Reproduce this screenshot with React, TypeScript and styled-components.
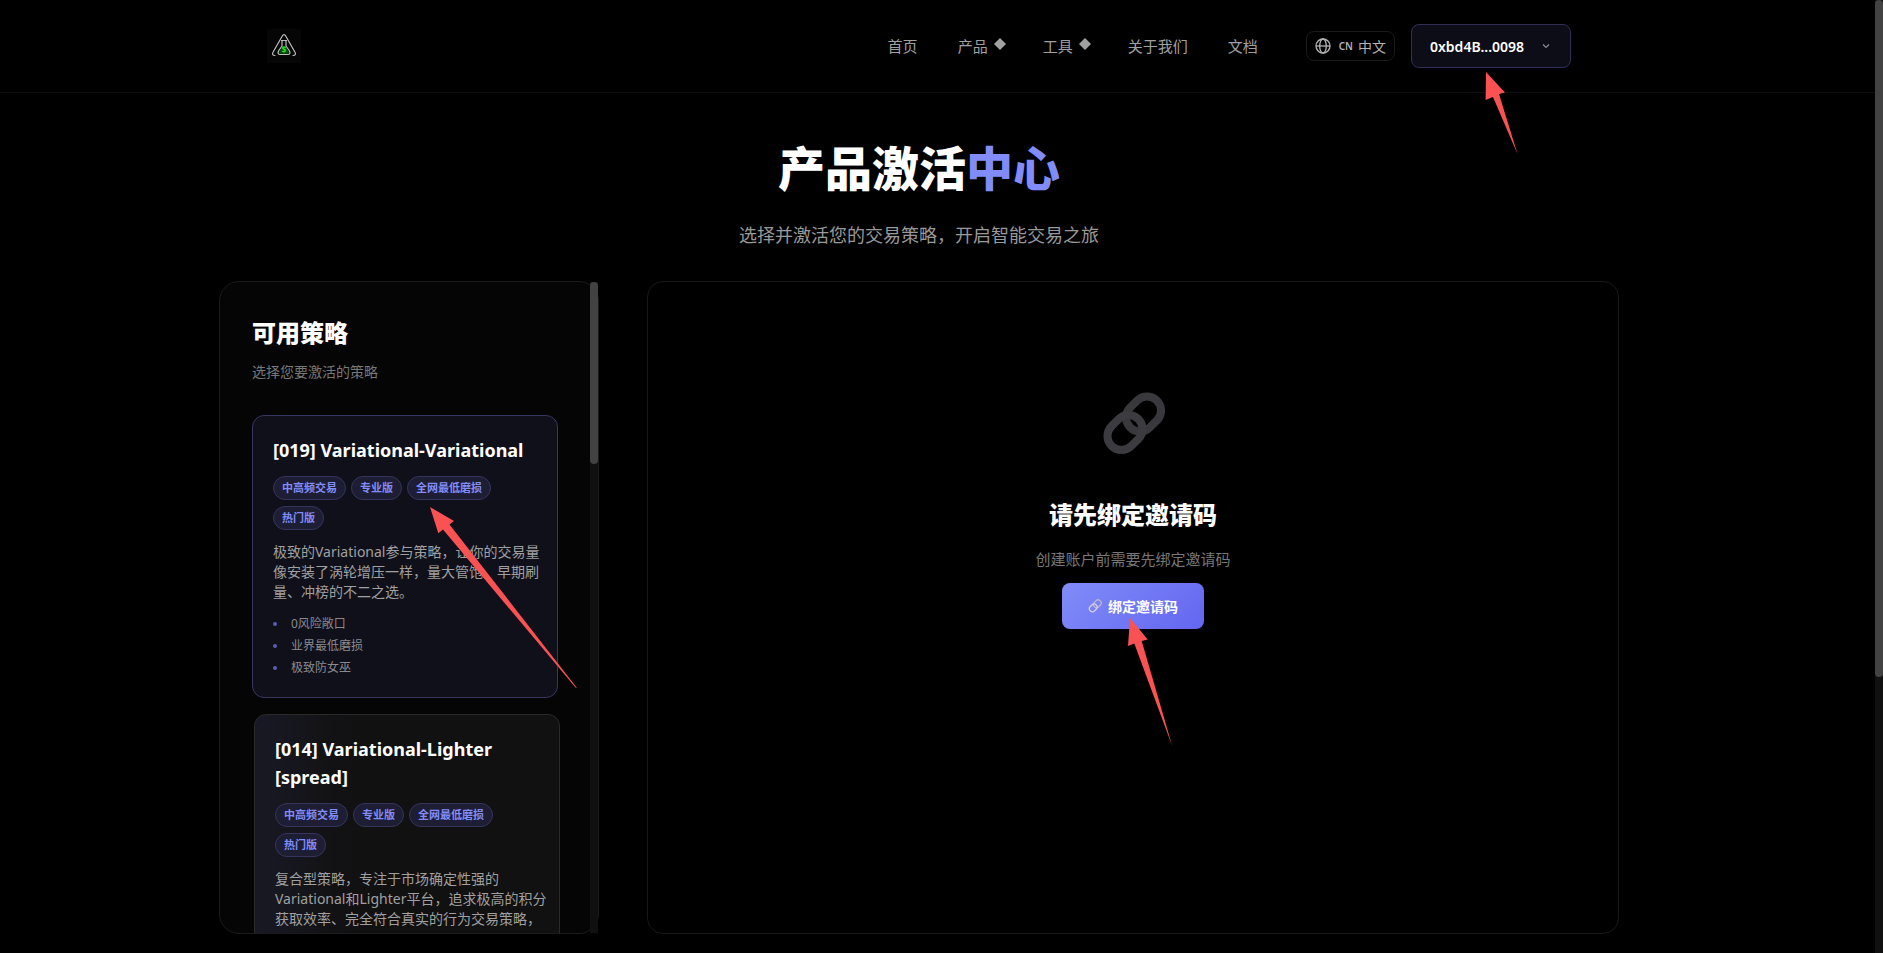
import React from "react";
import styled, { createGlobalStyle, css } from "styled-components";

const GlobalStyle = createGlobalStyle`
  *, *::before, *::after { box-sizing: border-box; }
  body {
    margin: 0;
    background: #000;
    color: #fff;
    font-family: "Noto Sans", "Noto Sans CJK SC", sans-serif;
    font-size: 14px;
  }
  h1, h2, h3, p, ul { margin: 0; padding: 0; }
  ul { list-style: none; }
  button { font: inherit; color: inherit; cursor: pointer; }
  a { color: inherit; text-decoration: none; }
`;

const Page = styled.div`
  min-height: 100vh;
  padding-right: 8px;
  overflow: hidden;
`;

const Header = styled.header`
  border-bottom: 1px solid #101010;
  padding-right: 37px;
`;

const HeaderInner = styled.div`
  max-width: 1400px;
  margin: 0 auto;
  padding: 24px 48px;
  display: flex;
  align-items: center;
  justify-content: space-between;
`;

const LogoLink = styled.a`
  display: flex;
  width: 34px;
  height: 34px;
  background: #060606;
`;

const HeaderRight = styled.div`
  display: flex;
  align-items: center;
  gap: 48px;
`;

const Nav = styled.nav`
  display: flex;
  align-items: center;
  gap: 40px;
`;

const NavLink = styled.a`
  display: flex;
  align-items: center;
  gap: 6px;
  font-size: 15px;
  line-height: 24px;
  color: #a0a0a0;

  svg { margin: -4px -3px 0 0; }
`;

const Actions = styled.div`
  display: flex;
  align-items: center;
  gap: 16px;
`;

const LanguageButton = styled.button`
  display: flex;
  align-items: center;
  gap: 5px;
  height: 30px;
  padding: 0 8px;
  border: 1px solid #1a1a1a;
  border-radius: 8px;
  background: transparent;
  color: #b4b4b4;
  font-size: 14px;

  small {
    margin-left: 3px;
    font-size: 10px;
    font-weight: 600;
  }
`;

const WalletButton = styled.button`
  position: relative;
  display: flex;
  align-items: center;
  justify-content: space-between;
  width: 160px;
  height: 44px;
  padding: 0 20px 0 18px;
  border: 1px solid #302e55;
  border-radius: 8px;
  background: #0d0d17;
  font-size: 14px;
  font-weight: 600;
`;

const Main = styled.main`
  padding: 47px 37px 19px 0;
`;

const Hero = styled.section`
  text-align: center;
`;

const Title = styled.h1`
  font-size: 47px;
  line-height: 56px;
  font-weight: 900;

  span { color: #818cf8; }
`;

const Subtitle = styled.p`
  margin-top: 24px;
  font-size: 18px;
  line-height: 30px;
  font-weight: 400;
  color: #999;
`;

const Columns = styled.div`
  max-width: 1400px;
  height: calc(100vh - 300px);
  margin: 31px auto 0;
  display: grid;
  grid-template-columns: 380px minmax(0, 1fr);
  gap: 48px;
`;

const SidebarFrame = styled.aside`
  position: relative;
  min-height: 0;
`;

const Sidebar = styled.div`
  height: 100%;
  overflow: hidden;
  padding: 32px 40px 0 32px;
  border: 1px solid #1b1b1b;
  border-radius: 20px;
  background: #050505;
`;

const SidebarTitle = styled.h2`
  font-size: 24px;
  line-height: 38px;
  font-weight: 900;
`;

const SidebarHint = styled.p`
  margin: 7px 0 31px;
  font-size: 14px;
  line-height: 25px;
  color: #777;
`;

const CardList = styled.div`
  display: flex;
  flex-direction: column;
  gap: 16px;
`;

type CardState = "selected" | "hovered";

const Card = styled.article<{ $state: CardState }>`
  position: relative;
  padding: 20px;
  border: 1px solid #2a2a2a;
  border-radius: 12px;
  ${({ $state }) =>
    $state === "selected"
      ? css`
          z-index: 1;
          border-color: #37365f;
          background: #10101b;
        `
      : css`
          background: linear-gradient(90deg, #191926 0, #121214 80px, #111 130px);
          transform: translateX(2px);
        `}
`;

const CardTitle = styled.h3`
  font-size: 18px;
  line-height: 28px;
  font-weight: 700;
`;

const Tags = styled.div`
  display: flex;
  flex-wrap: wrap;
  gap: 6px 5px;
  margin: 12px 0;
`;

const Tag = styled.span`
  height: 24px;
  padding: 0 8px;
  border: 1px solid #35345c;
  border-radius: 12px;
  background: #1d1d33;
  color: #818cf8;
  font-size: 11px;
  line-height: 22px;
  font-weight: 600;
`;

const Description = styled.p`
  font-size: 14px;
  line-height: 20px;
  color: #a0a0a0;
  white-space: pre;
`;

const Features = styled.ul`
  display: flex;
  flex-direction: column;
  gap: 4px;
  margin-top: 13px;

  li {
    display: flex;
    align-items: center;
    gap: 14px;
    font-size: 12px;
    line-height: 18px;
    color: #8a8a8e;
  }

  li::before {
    content: "";
    width: 4px;
    height: 4px;
    border-radius: 2px;
    background: #5c5fa8;
  }
`;

const Panel = styled.section`
  display: flex;
  flex-direction: column;
  align-items: center;
  padding-top: 110px;
  border: 1px solid #181818;
  border-radius: 16px;
  text-align: center;
`;

const PanelTitle = styled.h2`
  margin-top: 42px;
  font-size: 24px;
  line-height: 34px;
  font-weight: 900;
`;

const PanelText = styled.p`
  margin: 15px 0 12px;
  font-size: 15px;
  line-height: 24px;
  color: #777;
`;

const BindButton = styled.button`
  position: relative;
  display: flex;
  align-items: center;
  gap: 6px;
  height: 46px;
  padding: 0 26px;
  border: 0;
  border-radius: 8px;
  background: linear-gradient(135deg, #818cf8, #6366f1);
  color: #fff;
  font-size: 14px;
  font-weight: 700;
`;

const Track = styled.div<{ $page?: boolean }>`
  position: ${({ $page }) => ($page ? "fixed" : "absolute")};
  top: ${({ $page }) => ($page ? 0 : 1)}px;
  right: ${({ $page }) => ($page ? 0 : 1)}px;
  bottom: ${({ $page }) => ($page ? 0 : 1)}px;
  width: 8px;
  background: #101010;
`;

const Thumb = styled.div<{ $size: number }>`
  height: ${({ $size }) => $size}%;
  border-radius: 4px;
  background: #424242;
`;

const ArrowSvg = styled.svg<{ $x: number; $y: number }>`
  position: absolute;
  left: ${({ $x }) => $x}px;
  top: ${({ $y }) => $y}px;
  z-index: 2;
  overflow: visible;
  pointer-events: none;
`;

function Arrow({ x, y, points }: { x: number; y: number; points: string }) {
  return (
    <ArrowSvg $x={x} $y={y} width="1" height="1" aria-hidden="true">
      <polygon points={points} fill="#fa5252" />
    </ArrowSvg>
  );
}

function Logo() {
  return (
    <svg width="34" height="34" viewBox="0 0 34 34" fill="none" stroke="#bdbdbd" strokeWidth="1.2" strokeLinecap="round">
      <path d="M8 26.500C5.500 26.500 5 25 6 23.300L15.300 7C16.300 5.200 17.700 5.200 18.700 7L28 23.300C29 25 28.500 26.500 26 26.500" />
      <path d="M14.500 11.500h5M15 11.500v5.500L11.500 22C10.500 24.300 11.200 25.500 13 25.500h8C22.800 25.500 23.500 24.300 22.500 22L19 17v-5.500" />
      <path d="M15 18h4l3 5.500-1.500 1.300h-7l-1.500-1.300z" fill="#04500a" stroke="none" />
      <text x="17" y="23.500" textAnchor="middle" fontSize="8" fontWeight="700" fill="#2be02b" stroke="none">$</text>
    </svg>
  );
}

function Diamond() {
  return (
    <svg width="12" height="12" viewBox="0 0 12 12" aria-hidden="true">
      <path d="M6 0l6 6-6 6-6-6z" fill="#a0a0a0" />
    </svg>
  );
}

function Globe() {
  return (
    <svg width="16" height="16" viewBox="0 0 16 16" fill="none" stroke="currentColor" strokeWidth="1.3" aria-hidden="true">
      <circle cx="8" cy="8" r="7" />
      <ellipse cx="8" cy="8" rx="3.300" ry="7" />
      <path d="M1 8h14" />
    </svg>
  );
}

function Chevron() {
  return (
    <svg width="8" height="8" viewBox="0 0 8 8" fill="none" stroke="#8b8b95" strokeWidth="1.2" aria-hidden="true">
      <path d="M1 2.500l3 3 3-3" />
    </svg>
  );
}

function ChainLink({ size, color, shade, weight }: { size: number; color: string; shade: string; weight: number }) {
  return (
    <svg width={size} height={size} viewBox="0 0 64 64" fill="none" strokeWidth={weight} aria-hidden="true">
      <rect x="-19" y="-14" width="38" height="28" rx="14" transform="translate(42.500 22) rotate(-45)" stroke={shade} />
      <rect x="-19" y="-14" width="38" height="28" rx="14" transform="translate(24 40.500) rotate(-45)" stroke={color} />
    </svg>
  );
}

const navItems = [
  { label: "首页" },
  { label: "产品", menu: true },
  { label: "工具", menu: true },
  { label: "关于我们" },
  { label: "文档" },
];

const tags = ["中高频交易", "专业版", "全网最低磨损", "热门版"];

const strategies: { title: string; state: CardState; text: string; features: string[] }[] = [
  {
    title: "[019] Variational-Variational",
    state: "selected",
    text: "极致的Variational参与策略，让你的交易量\n像安装了涡轮增压一样，量大管饱，早期刷\n量、冲榜的不二之选。",
    features: ["0风险敞口", "业界最低磨损", "极致防女巫"],
  },
  {
    title: "[014] Variational-Lighter [spread]",
    state: "hovered",
    text: "复合型策略，专注于市场确定性强的\nVariational和Lighter平台，追求极高的积分\n获取效率、完全符合真实的行为交易策略，",
    features: [],
  },
];

export default function App() {
  return (
    <>
      <GlobalStyle />
      <Page>
        <Header>
          <HeaderInner>
            <LogoLink href="#" aria-label="首页">
              <Logo />
            </LogoLink>
            <HeaderRight>
              <Nav>
                {navItems.map((item) => (
                  <NavLink href="#" key={item.label}>
                    {item.label}
                    {item.menu && <Diamond />}
                  </NavLink>
                ))}
              </Nav>
              <Actions>
                <LanguageButton type="button">
                  <Globe />
                  <small>CN</small>
                  中文
                </LanguageButton>
                <WalletButton type="button">
                  0xbd4B...0098
                  <Chevron />
                  <Arrow x={74} y={47} points="0,0 19,20.6 13,22 31.6,82.3 7,25 -0.4,28" />
                </WalletButton>
              </Actions>
            </HeaderRight>
          </HeaderInner>
        </Header>

        <Main>
          <Hero>
            <Title>
              产品激活<span>中心</span>
            </Title>
            <Subtitle>选择并激活您的交易策略，开启智能交易之旅</Subtitle>
          </Hero>

          <Columns>
            <SidebarFrame>
              <Sidebar>
                <SidebarTitle>可用策略</SidebarTitle>
                <SidebarHint>选择您要激活的策略</SidebarHint>
                <CardList>
                  {strategies.map((s) => (
                    <Card key={s.title} $state={s.state}>
                      <CardTitle>{s.title}</CardTitle>
                      <Tags>
                        {tags.map((t) => (
                          <Tag key={t}>{t}</Tag>
                        ))}
                      </Tags>
                      <Description>{s.text}</Description>
                      <Features>
                        {s.features.map((f) => (
                          <li key={f}>{f}</li>
                        ))}
                      </Features>
                      {s.state === "selected" && (
                        <Arrow x={177} y={91} points="0,0 24,14 19.5,17.5 147,181 145.5,180.5 13,22.6 8.3,26.3" />
                      )}
                    </Card>
                  ))}
                </CardList>
              </Sidebar>
              <Track>
                <Thumb $size={28} />
              </Track>
            </SidebarFrame>

            <Panel>
              <ChainLink size={64} color="#3c3b3f" shade="#39383c" weight={8} />
              <PanelTitle>请先绑定邀请码</PanelTitle>
              <PanelText>创建账户前需要先绑定邀请码</PanelText>
              <BindButton type="button">
                <ChainLink size={14} color="#d6cfdc" shade="#bdb4cc" weight={6} />
                绑定邀请码
                <Arrow x={68} y={35} points="0,0 17.7,21.6 11.7,23 42.3,128.3 4.3,25.6 -2,28" />
              </BindButton>
            </Panel>
          </Columns>
        </Main>
      </Page>
      <Track $page>
        <Thumb $size={71} />
      </Track>
    </>
  );
}
